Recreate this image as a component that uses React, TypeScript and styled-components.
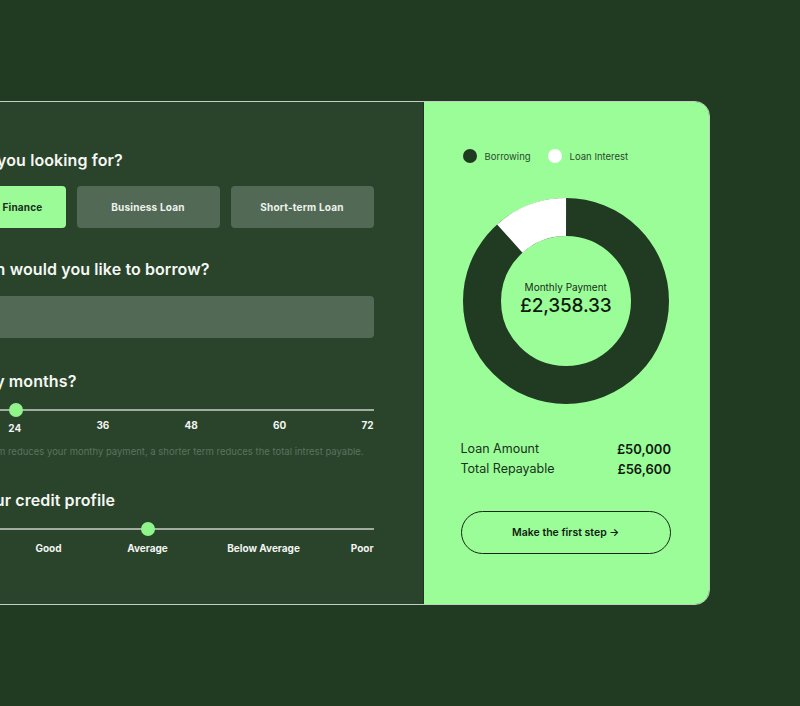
import styled, { createGlobalStyle } from "styled-components";

const GlobalStyle = createGlobalStyle`
  html, body {
    margin: 0;
    padding: 0;
    background: #213a22;
  }
  body {
    font-family: Inter, "Noto Sans", Arial, sans-serif;
    overflow: hidden;
  }
`;

const Page = styled.main`
  width: 800px;
  height: 706px;
  padding-top: 101px;
  box-sizing: border-box;
`;

const Card = styled.section`
  display: flex;
  width: 838.5px;
  height: 504px;
  margin-left: -128.5px;
  box-sizing: border-box;
  border: 1.5px solid #c3cdc2;
  border-radius: 0 15px 15px 0;
  overflow: hidden;
`;

const LeftPanel = styled.div`
  width: 551px;
  flex: none;
  background: #2a432b;
  padding: 46px 49px 0 50px;
  box-sizing: border-box;
  border-right: 1px solid #203520;
  display: flex;
  flex-direction: column;
`;

const Heading = styled.h2<{ $top: number }>`
  margin: ${(p) => p.$top}px 0 0;
  font-size: 16px;
  line-height: 24px;
  font-weight: 600;
  color: #f4f7f3;
  letter-spacing: 0.1px;
  white-space: nowrap;
`;

const OptionRow = styled.div`
  display: grid;
  grid-template-columns: repeat(3, 1fr);
  gap: 11px;
  margin-top: 14px;
`;

const Option = styled.button<{ $active?: boolean }>`
  height: 42px;
  border: none;
  border-radius: 4px;
  background: ${(p) => (p.$active ? "#9afb97" : "#526a55")};
  color: ${(p) => (p.$active ? "#1c2f1d" : "#eef2ed")};
  font-family: inherit;
  font-size: 10px;
  font-weight: 700;
  letter-spacing: 0.2px;
  white-space: nowrap;
`;

const AmountInput = styled.div`
  height: 42px;
  margin-top: 15px;
  border-radius: 4px;
  background: #526a55;
`;

const Slider = styled.div<{ $top: number }>`
  position: relative;
  height: 14px;
  margin-top: ${(p) => p.$top}px;
  &::before {
    content: "";
    position: absolute;
    left: 0;
    right: 0;
    top: 6px;
    height: 2px;
    background: #a2ada1;
  }
`;

const Thumb = styled.span`
  position: absolute;
  top: 0;
  width: 14px;
  height: 14px;
  margin-left: -7px;
  border-radius: 50%;
  background: #8ff58b;
`;

const MonthLabels = styled.div`
  display: flex;
  justify-content: space-between;
  align-items: flex-start;
  margin-top: 2px;
`;

const CreditLabels = styled.div`
  display: grid;
  grid-template-columns: 72px 108px 90px 142px 39px;
  margin-top: 6px;
  span {
    text-align: center;
  }
  span:first-child {
    text-align: left;
  }
  span:last-child {
    text-align: right;
  }
`;

const Label = styled.span<{ $active?: boolean }>`
  font-size: 10px;
  line-height: 12px;
  font-weight: 700;
  color: #f1f4f0;
  white-space: nowrap;
  margin-top: ${(p) => (p.$active ? "3px" : "0")};
`;

const Note = styled.p`
  margin: 12px 0 0;
  font-size: 9.5px;
  line-height: 12px;
  color: #5a735d;
  white-space: nowrap;
`;

const RightPanel = styled.div`
  flex: 1;
  background: #9afd98;
  padding: 47px 38px 0 37px;
  display: flex;
  flex-direction: column;
`;

const Legend = styled.div`
  display: flex;
  align-items: center;
  gap: 17px;
  height: 14px;
  margin-left: 2px;
`;

const LegendItem = styled.div`
  display: flex;
  align-items: center;
  gap: 8px;
  font-size: 9.5px;
  color: #2c4a2d;
`;

const Dot = styled.span<{ $color: string }>`
  width: 14px;
  height: 14px;
  border-radius: 50%;
  background: ${(p) => p.$color};
`;

const ChartWrap = styled.div`
  position: relative;
  width: 206px;
  height: 206px;
  margin: 35px auto 0;
`;

const ChartCenter = styled.div`
  position: absolute;
  inset: 0;
  display: flex;
  flex-direction: column;
  align-items: center;
  justify-content: center;
  padding-bottom: 4px;
  color: #0f1a0f;
`;

const CenterLabel = styled.span`
  font-size: 10px;
  line-height: 13px;
  color: #1b2c1b;
`;

const CenterValue = styled.span`
  font-size: 19px;
  line-height: 24px;
  font-weight: 500;
  letter-spacing: -0.2px;
`;

const Summary = styled.div`
  margin-top: 36px;
  display: flex;
  flex-direction: column;
  gap: 2px;
`;

const SummaryRow = styled.div`
  display: flex;
  justify-content: space-between;
  font-size: 12.5px;
  line-height: 18px;
  color: #1c301d;
  span:last-child {
    font-weight: 600;
    font-size: 13px;
    color: #0f1a0f;
  }
`;

const CTA = styled.button`
  margin-top: 33px;
  height: 43px;
  border: 1.5px solid #172617;
  border-radius: 22px;
  background: transparent;
  font-family: inherit;
  font-size: 10.5px;
  font-weight: 600;
  color: #111c11;
`;

const months = ["12", "24", "36", "48", "60", "72"];
const credit = ["Excellent", "Good", "Average", "Below Average", "Poor"];

function Donut() {
  const r = 84;
  const c = 2 * Math.PI * r;
  const interest = (6600 / 56600) * c;
  return (
    <svg width="206" height="206" viewBox="0 0 206 206">
      <circle cx="103" cy="103" r={r} fill="none" stroke="#213a22" strokeWidth="38" />
      <circle
        cx="103"
        cy="103"
        r={r}
        fill="none"
        stroke="#ffffff"
        strokeWidth="38"
        strokeDasharray={`${interest} ${c}`}
        transform="rotate(-132 103 103)"
      />
    </svg>
  );
}

function App() {
  return (
    <>
      <GlobalStyle />
      <Page>
        <Card>
          <LeftPanel>
            <Heading $top={0}>What are you looking for?</Heading>
            <OptionRow>
              <Option $active>Equipment Finance</Option>
              <Option>Business Loan</Option>
              <Option>Short-term Loan</Option>
            </OptionRow>

            <Heading $top={29}>How much would you like to borrow?</Heading>
            <AmountInput />

            <Heading $top={31}>How many months?</Heading>
            <Slider $top={10}>
              <Thumb style={{ left: "20.8%" }} />
            </Slider>
            <MonthLabels>
              {months.map((m) => (
                <Label key={m} $active={m === "24"}>
                  {m}
                </Label>
              ))}
            </MonthLabels>
            <Note>
              A longer loan term reduces your monthy payment, a shorter term reduces the total intrest payable.
            </Note>

            <Heading $top={30}>Select your credit profile</Heading>
            <Slider $top={10}>
              <Thumb style={{ left: "49.9%" }} />
            </Slider>
            <CreditLabels>
              {credit.map((c) => (
                <Label key={c}>{c}</Label>
              ))}
            </CreditLabels>
          </LeftPanel>

          <RightPanel>
            <Legend>
              <LegendItem>
                <Dot $color="#213a22" />
                Borrowing
              </LegendItem>
              <LegendItem>
                <Dot $color="#ffffff" />
                Loan Interest
              </LegendItem>
            </Legend>

            <ChartWrap>
              <Donut />
              <ChartCenter>
                <CenterLabel>Monthly Payment</CenterLabel>
                <CenterValue>£2,358.33</CenterValue>
              </ChartCenter>
            </ChartWrap>

            <Summary>
              <SummaryRow>
                <span>Loan Amount</span>
                <span>£50,000</span>
              </SummaryRow>
              <SummaryRow>
                <span>Total Repayable</span>
                <span>£56,600</span>
              </SummaryRow>
            </Summary>

            <CTA>Make the first step →</CTA>
          </RightPanel>
        </Card>
      </Page>
    </>
  );
}

export default App;
